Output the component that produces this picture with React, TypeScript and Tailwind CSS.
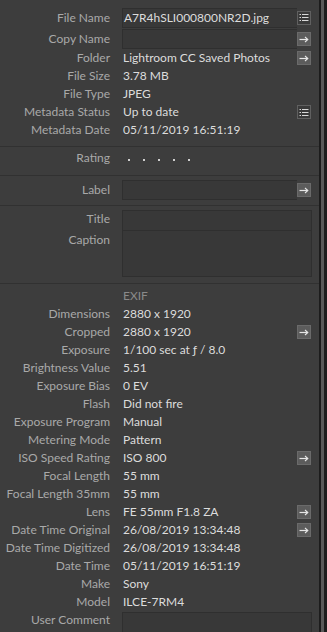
import React from "react";

const font = { fontFamily: "Lato, 'Open Sans', sans-serif" };

function ArrowBtn() {
  return (
    <div className="w-[14px] h-[14px] shrink-0 bg-[#5c5c5c] border border-[#6a6a6a] flex items-center justify-center">
      <svg width="10" height="8" viewBox="0 0 10 8">
        <path d="M0.5 4.5H8.5" stroke="#e6e6e6" strokeWidth="1.2" />
        <path d="M6 2L8.8 4.5L6 7" stroke="#e6e6e6" strokeWidth="1.1" fill="none" />
      </svg>
    </div>
  );
}

function ListBtn() {
  return (
    <div className="w-[14px] h-[14px] shrink-0 bg-[#3a3a3a] border border-[#606060] flex items-center justify-center">
      <svg width="10" height="9" viewBox="0 0 10 9">
        <rect x="0.5" y="1" width="1.5" height="1" fill="#d8d8d8" />
        <rect x="3" y="1" width="6.5" height="1" fill="#d8d8d8" />
        <rect x="0.5" y="4" width="1.5" height="1" fill="#d8d8d8" />
        <rect x="3" y="4" width="6.5" height="1" fill="#d8d8d8" />
        <rect x="0.5" y="7" width="1.5" height="1" fill="#d8d8d8" />
        <rect x="3" y="7" width="6.5" height="1" fill="#d8d8d8" />
      </svg>
    </div>
  );
}

function Label({ children, top }: { children?: React.ReactNode; top?: boolean }) {
  return (
    <div
      className={
        "w-[110px] shrink-0 text-right text-[#a9a9a9] whitespace-nowrap leading-[18px] " +
        (top ? "self-start" : "")
      }
    >
      {children}
    </div>
  );
}

function TextRow({ label, value, btn }: { label: string; value?: string; btn?: "arrow" | "list" }) {
  return (
    <div className="flex h-[18px] items-center">
      <Label>{label}</Label>
      <div className="ml-[12px] w-[189px] flex items-center">
        <div className="flex-1 pl-[1px] text-[#dcdcdc] whitespace-nowrap leading-[18px]">{value}</div>
        {btn === "arrow" && <ArrowBtn />}
        {btn === "list" && <ListBtn />}
      </div>
    </div>
  );
}

function BoxRow({ label, value, btn }: { label: string; value?: string; btn?: "arrow" | "list" }) {
  return (
    <div className="flex h-[21px] items-center">
      <Label>{label}</Label>
      <div className="ml-[12px] w-[189px] flex items-center">
        <div className="w-[175px] h-[20px] bg-[#383838] border border-[#2f2f2f] border-r-0 pl-[1px] text-[#dcdcdc] leading-[18px] whitespace-nowrap">
          {value}
        </div>
        {btn === "arrow" && <ArrowBtn />}
        {btn === "list" && <ListBtn />}
      </div>
    </div>
  );
}

const exif: [string, string, ("arrow" | "list")?][] = [
  ["Dimensions", "2880 x 1920"],
  ["Cropped", "2880 x 1920", "arrow"],
  ["Exposure", "1/100 sec at \u0192 / 8.0"],
  ["Brightness Value", "5.51"],
  ["Exposure Bias", "0 EV"],
  ["Flash", "Did not fire"],
  ["Exposure Program", "Manual"],
  ["Metering Mode", "Pattern"],
  ["ISO Speed Rating", "ISO 800", "arrow"],
  ["Focal Length", "55 mm"],
  ["Focal Length 35mm", "55 mm"],
  ["Lens", "FE 55mm F1.8 ZA", "arrow"],
  ["Date Time Original", "26/08/2019 13:34:48", "arrow"],
  ["Date Time Digitized", "26/08/2019 13:34:48"],
  ["Date Time", "05/11/2019 16:51:19"],
  ["Make", "Sony"],
  ["Model", "ILCE-7RM4"],
];

export default function App() {
  return (
    <div className="w-[327px] h-[632px] flex overflow-hidden text-[12px]" style={font}>
      <div className="w-[319px] h-full bg-[#3d3d3d] overflow-hidden flex flex-col">
        {/* File section */}
        <div className="pt-[7px] pb-[7px]">
          <BoxRow label="File Name" value="A7R4hSLI000800NR2D.jpg" btn="list" />
          <BoxRow label="Copy Name" btn="arrow" />
          <TextRow label="Folder" value="Lightroom CC Saved Photos" btn="arrow" />
          <TextRow label="File Size" value="3.78 MB" />
          <TextRow label="File Type" value="JPEG" />
          <TextRow label="Metadata Status" value="Up to date" btn="list" />
          <TextRow label="Metadata Date" value="05/11/2019 16:51:19" />
        </div>
        {/* Rating */}
        <div className="border-t border-[#313131] pt-[2px] pb-[8px]">
          <div className="flex h-[18px] items-center">
            <Label>Rating</Label>
            <div className="ml-[12px] flex items-center gap-[13px] pl-[6px]">
              {[0, 1, 2, 3, 4].map((i) => (
                <div key={i} className="w-[2px] h-[2px] bg-[#cfcfcf] mt-[3px]" />
              ))}
            </div>
          </div>
        </div>
        {/* Label */}
        <div className="border-t border-[#313131] pt-[3px] pb-[5px]">
          <BoxRow label="Label" btn="arrow" />
        </div>
        {/* Title / Caption */}
        <div className="border-t border-[#313131] pt-[4px] pb-[6px]">
          <div className="flex items-start">
            <Label top>
              <div className="h-[20px] leading-[18px]">Title</div>
              <div className="leading-[18px] mt-[1px]">Caption</div>
            </Label>
            <div className="ml-[12px] w-[190px] flex flex-col">
              <div className="h-[21px] bg-[#383838] border border-[#2f2f2f]" />
              <div className="h-[46px] bg-[#383838] border border-[#2f2f2f] border-t-0" />
            </div>
          </div>
        </div>
        {/* EXIF */}
        <div className="border-t border-[#313131] pt-[3px]">
          <div className="flex h-[18px] items-center">
            <div className="w-[110px] shrink-0" />
            <div className="ml-[13px] text-[#8a8a8a] leading-[18px]">EXIF</div>
          </div>
          {exif.map(([l, v, b]) => (
            <TextRow key={l} label={l} value={v} btn={b} />
          ))}
          <div className="flex items-start">
            <Label>User Comment</Label>
            <div className="ml-[12px] w-[190px] h-[40px] mt-[1px] bg-[#383838] border border-[#2f2f2f]" />
          </div>
        </div>
      </div>
      <div className="w-[2px] h-full bg-[#1c1c1c]" />
      <div className="w-[3px] h-full bg-[#5a5a5a]" />
      <div className="w-[3px] h-full bg-[#1e1e1e]" />
    </div>
  );
}
